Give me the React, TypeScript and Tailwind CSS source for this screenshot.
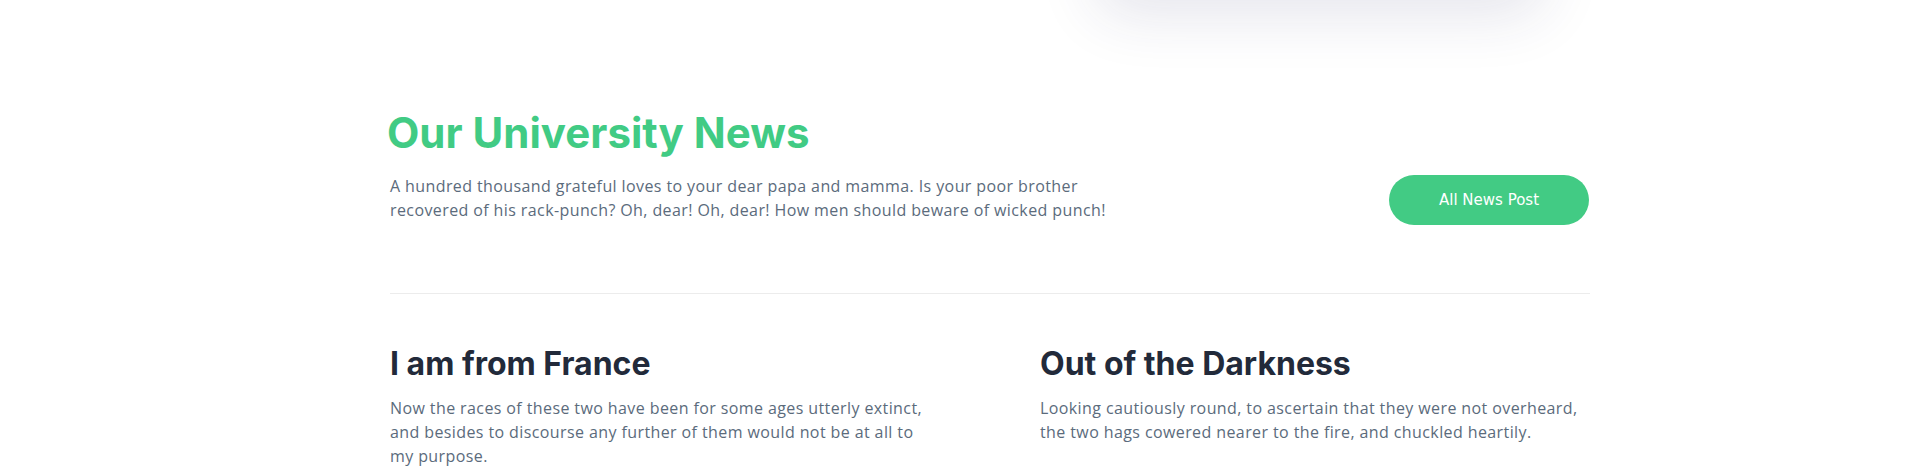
export default function App() {
  return (
    <div className="relative w-full h-[476px] overflow-hidden bg-white">
      <div className="absolute left-[1095px] top-[-215px] w-[450px] h-[200px] rounded-[30px] bg-white shadow-[0_30px_60px_rgba(40,40,100,0.12)]" />
      <div className="w-[1200px] ml-[390px] pt-[108px]">
        <h2 className="text-[42px] leading-[50px] font-bold text-[#41cb84] -ml-[3px] font-['Inter',sans-serif]">
          Our University News
        </h2>
        <div className="flex items-start justify-between mt-[15px]">
          <p className="mt-[1px] max-w-[730px] text-[16px] leading-[24px] tracking-[0.4px] text-[#5b6b7c] font-['Open_Sans',sans-serif]">
            A hundred thousand grateful loves to your dear papa and mamma. Is your poor brother recovered of his rack-punch? Oh, dear! Oh, dear! How men should beware of wicked punch!
          </p>
          <button className="w-[200px] h-[50px] mt-[2px] rounded-full bg-[#42cb84] text-white text-[15px] mr-[1px] font-['DejaVu_Sans',sans-serif]">
            All News Post
          </button>
        </div>
        <div className="h-px bg-[#ececec] mt-[68px]" />
        <div className="grid grid-cols-[545px_545px] gap-x-[105px] mt-[50px]">
          <div>
            <h3 className="text-[32px] leading-[40px] font-bold text-[#222a3a] font-['Inter',sans-serif]">I am from France</h3>
            <p className="mt-[12px] text-[16px] leading-[24px] tracking-[0.4px] text-[#5b6b7c] font-['Open_Sans',sans-serif]">
              Now the races of these two have been for some ages utterly extinct, and besides to discourse any further of them would not be at all to my purpose.
            </p>
          </div>
          <div>
            <h3 className="text-[32px] leading-[40px] font-bold text-[#222a3a] font-['Inter',sans-serif]">Out of the Darkness</h3>
            <p className="mt-[12px] text-[16px] leading-[24px] tracking-[0.4px] text-[#5b6b7c] font-['Open_Sans',sans-serif]">
              Looking cautiously round, to ascertain that they were not overheard, the two hags cowered nearer to the fire, and chuckled heartily.
            </p>
          </div>
        </div>
      </div>
    </div>
  );
}
